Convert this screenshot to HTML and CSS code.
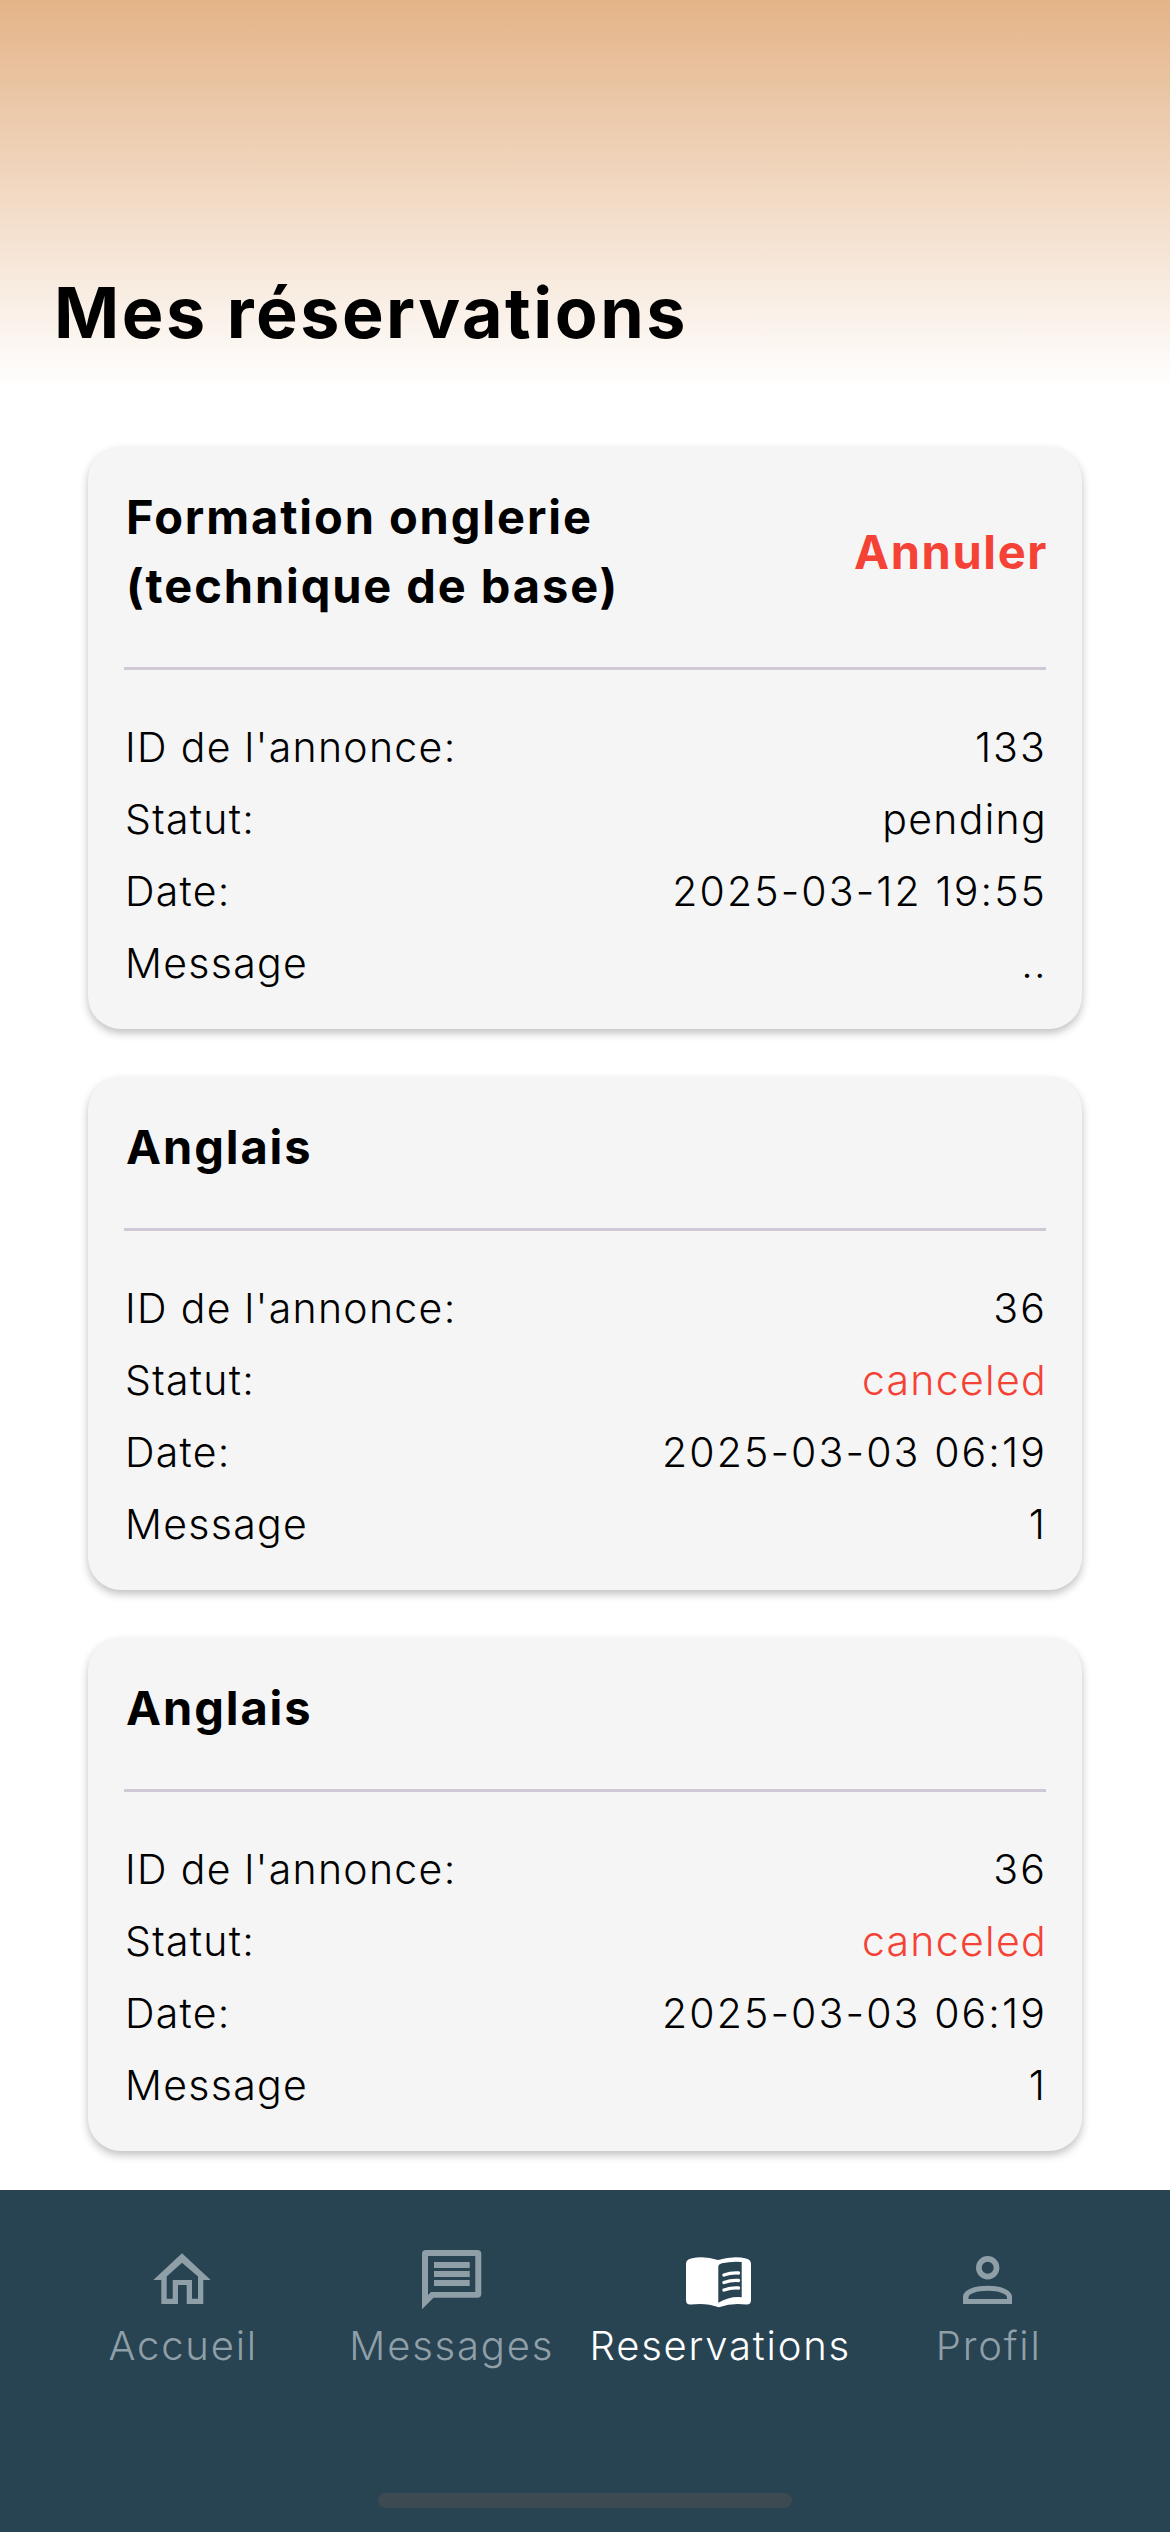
FILE: index.html
```html
<!DOCTYPE html>
<html lang="fr">
<head>
<meta charset="utf-8">
<title>Mes réservations</title>
<link rel="stylesheet" href="styles.css">
</head>
<body>
<div class="app">
  <header class="hero"><h1 class="page-title">Mes réservations</h1></header>
  <main class="list">
    <article class="card">
      <div class="card-head">
        <h2 class="card-title">Formation onglerie<br>(technique de base)</h2>
        <span class="cancel">Annuler</span>
      </div>
      <hr class="rule">
      <dl class="rows">
        <div class="row"><dt>ID de l'annonce:</dt><dd class="num">133</dd></div>
        <div class="row"><dt>Statut:</dt><dd>pending</dd></div>
        <div class="row"><dt>Date:</dt><dd class="num">2025-03-12 19:55</dd></div>
        <div class="row"><dt>Message</dt><dd>..</dd></div>
      </dl>
    </article>
    <article class="card">
      <div class="card-head"><h2 class="card-title">Anglais</h2></div>
      <hr class="rule">
      <dl class="rows">
        <div class="row"><dt>ID de l'annonce:</dt><dd class="num">36</dd></div>
        <div class="row"><dt>Statut:</dt><dd class="red">canceled</dd></div>
        <div class="row"><dt>Date:</dt><dd class="num">2025-03-03 06:19</dd></div>
        <div class="row"><dt>Message</dt><dd class="num">1</dd></div>
      </dl>
    </article>
    <article class="card">
      <div class="card-head"><h2 class="card-title">Anglais</h2></div>
      <hr class="rule">
      <dl class="rows">
        <div class="row"><dt>ID de l'annonce:</dt><dd class="num">36</dd></div>
        <div class="row"><dt>Statut:</dt><dd class="red">canceled</dd></div>
        <div class="row"><dt>Date:</dt><dd class="num">2025-03-03 06:19</dd></div>
        <div class="row"><dt>Message</dt><dd class="num">1</dd></div>
      </dl>
    </article>
  </main>
  <nav class="tabs">
    <div class="tab">
      <svg class="icon" viewBox="0 0 66 60"><path fill="currentColor" fill-rule="evenodd" d="M33 3.300 61.700 30H54.300V54H37.700V35H29V54H12.300V30H4.300ZM33 12.700 17.700 26.500V48.700H23.700V30H43V48.700H49V26.500Z"/></svg>
      <span class="tab-label">Accueil</span>
    </div>
    <div class="tab">
      <svg class="icon" viewBox="0 0 66 60"><path fill="currentColor" fill-rule="evenodd" d="M8 0H59.300Q63.300 0 63.300 4V43.700Q63.300 47.700 59.300 47.700H15.500L4 59.300V4Q4 0 8 0ZM10 6V45L13 42H57.300V6ZM16 12H51.700V18H16ZM16 21H51.700V27H16ZM16 30H51.700V36H16Z"/></svg>
      <span class="tab-label">Messages</span>
    </div>
    <div class="tab active">
      <svg class="icon" viewBox="0 0 66 60"><path fill="currentColor" fill-rule="evenodd" d="M5 8.500Q18 5.500 32 10Q48 5.500 60 8.500Q65 9.500 65 14V50Q65 55 60 54.500Q46 52.500 33 57.300Q20 52.500 5 54.500Q0 55 0 50V14Q0 9.500 5 8.500ZM32.300 16Q33 14 36 13.200Q46 11 55.700 12V47.300Q44 46 32.300 52.700Z"/><path fill="none" stroke="currentColor" stroke-width="3.400" stroke-linecap="round" d="M38 25Q45 22.500 52.500 23M38 32.500Q45 30 52.500 30.500M38 40Q45 37.500 52.500 38"/></svg>
      <span class="tab-label">Reservations</span>
    </div>
    <div class="tab">
      <svg class="icon" viewBox="0 0 66 60"><path fill="currentColor" fill-rule="evenodd" d="M32.700 6A11.700 11.700 0 1 1 32.700 29.400A11.700 11.700 0 1 1 32.700 6ZM32.700 11.700A6 6 0 1 0 32.700 23.700A6 6 0 1 0 32.700 11.700ZM32.700 35.700C46 35.700 57 40 57 47V54H8V47C8 40 19 35.700 32.700 35.700ZM32.700 40.700C22 40.700 13.500 43.500 13.500 47.500V49H52V47.500C52 43.500 43 40.700 32.700 40.700Z"/></svg>
      <span class="tab-label">Profil</span>
    </div>
    <div class="home-bar"></div>
  </nav>
</div>
</body>
</html>
```

FILE: styles.css
```css
* { box-sizing: border-box; }
html, body { margin: 0; padding: 0; }
body { background: #fff; font-family: Inter, "Noto Sans", sans-serif; color: #000; }
.app { width: 1170px; height: 2532px; display: flex; flex-direction: column; overflow: hidden; }
.hero { height: 388px; flex: none; padding: 268px 54px 0; background: linear-gradient(180deg, #e4b488 0%, #ffffff 100%); }
.page-title { margin: 0; font-size: 70px; line-height: 90px; font-weight: 700; letter-spacing: 2.500px; }
.list { flex: 1; padding: 59px 88px 0; display: flex; flex-direction: column; gap: 48px; }
.card { background: #f5f5f5; border-radius: 33px; padding: 35px 36px 30px; box-shadow: 0 4px 9px rgba(0,0,0,.25); }
.card-head { display: flex; justify-content: space-between; align-items: center; margin: 0 -2px 47px 0; padding-left: 2px; }
.card-title { margin: 0; font-size: 47px; line-height: 69px; font-weight: 700; letter-spacing: 1.900px; }
.cancel { font-size: 47px; line-height: 69px; font-weight: 700; color: #f44336; letter-spacing: 1.600px; }
.rule { border: 0; height: 3px; margin: 0 0 41px; background: #cfc9d6; }
.rows { margin: 0 -1px 0 0; padding-left: 1px; }
.row { display: flex; justify-content: space-between; height: 72px; align-items: center; font-size: 41px; font-weight: 300; letter-spacing: 1.300px; }
.row dt, .row dd { margin: 0; }
.row .num { letter-spacing: 2.100px; }
.red { color: #f44336; }
.tabs { position: relative; flex: none; height: 342px; background: #284352; padding: 60px 48px 0; display: flex; align-items: flex-start; }
.tab { flex: 1; display: flex; flex-direction: column; align-items: center; color: #8f9fa8; }
.tab.active { color: #fff; }
.icon { height: 60px; width: 66px; display: block; }
.tab-label { margin-top: 8px; padding-left: 2px; font-size: 40px; line-height: 56px; letter-spacing: 1.800px; font-weight: 300; }
.home-bar { position: absolute; left: 378px; top: 303px; width: 414px; height: 15px; border-radius: 8px; background: #3d4a52; }
```
